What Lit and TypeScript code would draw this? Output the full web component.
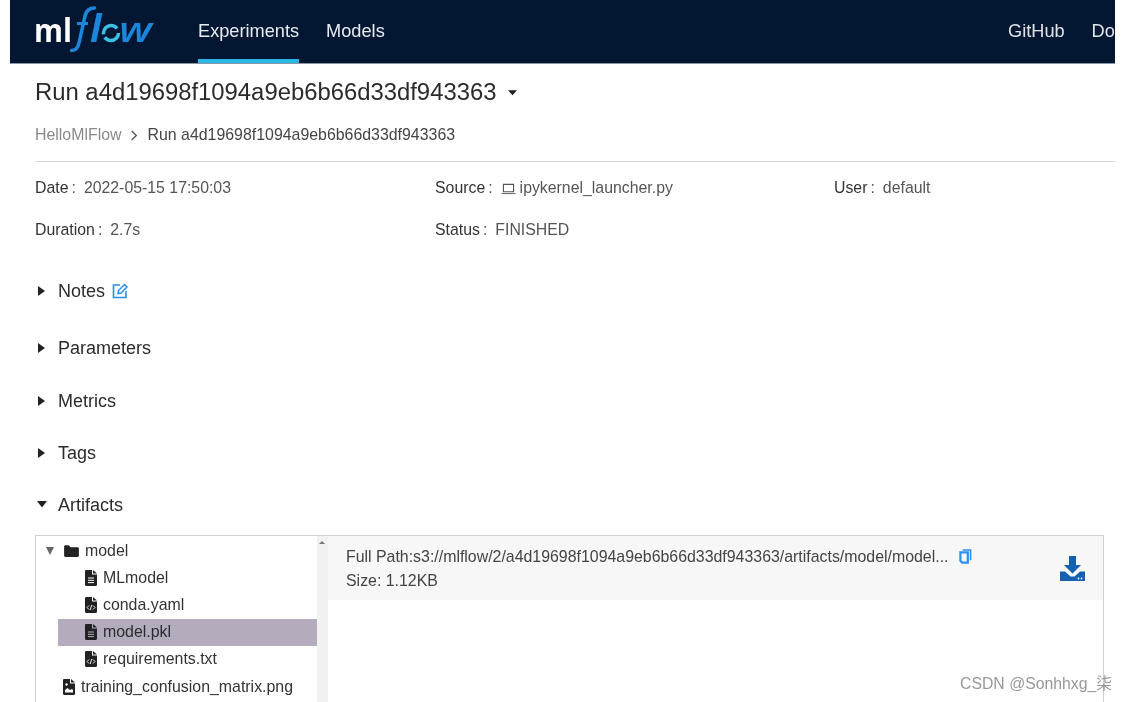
import { LitElement, html, css, svg } from "lit";
import { customElement } from "lit/decorators.js";

const docPath = svg`<path d="M0 1.200C0 .5.5 0 1.200 0H7v4.400h5v10.400c0 .7-.5 1.200-1.200 1.200H1.200C.5 16 0 15.500 0 14.800z" fill="#222"/><path d="M8 0l4 3.400H8z" fill="#222"/>`;
const fileIcon = (selected = false) => svg`<svg class="fi" viewBox="0 0 12 16" width="12" height="16">${docPath}<path d="M3 8h6M3 10.300h6M3 12.600h6" stroke="${selected ? "#b4abbd" : "#fff"}" stroke-width="1"/></svg>`;
const codeIcon = () => svg`<svg class="fi" viewBox="0 0 12 16" width="12" height="16">${docPath}<path d="M4 8.500L2 10.500l2 2M8 8.500l2 2-2 2M6.800 8l-1.600 5" fill="none" stroke="#fff" stroke-width=".9"/></svg>`;
const imgIcon = () => svg`<svg class="fi" viewBox="0 0 12 16" width="12" height="16">${docPath}<path d="M2 13.500V11l2.500-2 2.500 2 2-1 1 1v2.500z" fill="#fff"/><circle cx="3.500" cy="5.500" r="1.200" fill="#fff"/></svg>`;
const caretRight = svg`<svg viewBox="0 0 8 10" width="8" height="10"><path d="M0 0l7 5-7 5z" fill="#222"/></svg>`;
const caretDown = svg`<svg viewBox="0 0 10 8" width="10" height="8"><path d="M0 0h10L5 6.500z" fill="#222"/></svg>`;

@customElement("app-root")
export class AppRoot extends LitElement {
  static styles = css`
    :host { display: block; height: 702px; overflow: hidden; background: #fff;
      font-family: "Liberation Sans", Arial, sans-serif; color: #333; position: relative; filter: blur(.3px); }
    .frame { margin: 0 11px 0 10px; height: 702px; overflow: hidden; }
    header { height: 63px; background: #031732; border-bottom: 1px solid #8b94a3; display: flex; overflow: hidden; white-space: nowrap; }
    .logo { width: 163px; padding-left: 25px; box-sizing: content-box; display: block; height: 63px; flex: none; }
    .nav { display: flex; gap: 27px; flex: none; }
    .nav a { color: #e8ebef; font-size: 18.200px; height: 63px; box-sizing: border-box; line-height: 63px; display: block; }
    .nav a.on { border-bottom: 4px solid #2bb8e6; }
    .right { margin-left: auto; display: flex; gap: 27px; width: 107px; flex: none; }
    .right a { color: #dfe3e8; font-size: 18.200px; line-height: 63px; }
    main { padding-left: 25px; }
    h1 { margin: 0; font-weight: 400; font-size: 23.850px; line-height: 28px; padding-top: 14px; color: #2b2b2b; display: flex; align-items: center; }
    h1 svg { margin-left: 12px; margin-top: 1px; }
    .crumb { margin-top: 17px; height: 24px; font-size: 15.900px; line-height: 24px; display: flex; align-items: center; color: #444; }
    .crumb .p { color: #8a8a8a; }
    .crumb svg { margin: 0 10px 0 8px; }
    hr { border: 0; border-top: 1px solid #d6d6d6; margin: 14px 0 0; }
    .meta { display: grid; grid-template-columns: 400px 399px 1fr; row-gap: 20px; margin-top: 15px; font-size: 15.850px; line-height: 22px; }
    .meta .k { color: #333; }
    .meta .c { margin: 0 8px 0 3px; color: #555; }
    .meta .v { color: #555; }
    .meta svg { vertical-align: -2px; margin-right: 4px; }
    .sec { display: flex; align-items: center; font-size: 18px; line-height: 22px; color: #2b2b2b; }
    .sec .car { width: 23px; display: flex; padding-left: 3px; box-sizing: border-box; }
    .sec .car.d { padding-left: 2px; }
    .sec .edit { margin-left: 7px; }
    .s1 { margin-top: 39px; } .s2 { margin-top: 35px; } .s3 { margin-top: 30px; } .s3a { margin-top: 31px; }
    .box { margin: 19px 11px 0 0; border: 1px solid #cfcfcf; border-bottom: 0; height: 180px; display: flex; }
    .tree { width: 281px; flex: none; font-size: 15.900px; padding-top: 1px; box-sizing: border-box; color: #333; }
    .row { height: 27.200px; display: flex; align-items: center; white-space: nowrap; }
    .row .fi { margin-right: 6px; flex: none; }
    .l0 { padding-left: 27px; }
    .l1 { padding-left: 49px; }
    .row.sel { background: #b4abbd; color: #2b2b2b; margin-left: 22px; padding-left: 27px; }
    .l0c { padding-left: 10px; }
    .l0c .arrow { margin-right: 9px; display: flex; }
    .l0c .folder { margin-right: 5px; }
    .scroll { width: 11px; background: #f1f1f1; flex: none; position: relative; }
    .scroll i { position: absolute; left: 2px; top: 5px; border-left: 3px solid transparent; border-right: 3px solid transparent; border-bottom: 3px solid #777; }
    .panel { flex: 1; min-width: 0; }
    .info { height: 64px; background: #f7f7f7; padding: 9px 0 0 18px; box-sizing: border-box; font-size: 15.900px; line-height: 24px; position: relative; color: #444; white-space: nowrap; }
    .info .first { height: 24px; }
    .info .copy { margin-left: 10px; vertical-align: -2px; }
    .dl { position: absolute; right: 18px; top: 20px; }
    .wm { position: absolute; left: 960px; top: 674px; font-family: "Liberation Sans", "Noto Sans CJK SC", sans-serif; font-size: 15.800px; line-height: 20px; color: rgba(125,125,125,.8); white-space: nowrap; }
    .logotext { font-family: "Open Sans", sans-serif; }
  `;

  render() {
    const caret = svg`<svg viewBox="0 0 10 6" width="9" height="6"><path d="M0 0h10L5 5.500z" fill="#222"/></svg>`;
    return html`
      <div class="frame">
        <header>
          <svg class="logo" viewBox="0 0 163 63" aria-label="mlflow">
            <text x="-1" y="42" class="logotext" font-size="33" font-weight="700" fill="#fff" textLength="38" lengthAdjust="spacingAndGlyphs">ml</text>
            <path d="M36.500 50.500c4.500 0 6.500-2.500 7.500-7.500l6-27c1.200-5.500 4-8 9.500-8" fill="none" stroke="#1b86dc" stroke-width="3.500" stroke-linecap="round"/>
            <path d="M42 23.500h11" stroke="#1b86dc" stroke-width="3"/>
            <text x="55" y="42" class="logotext" font-size="38" font-style="italic" font-weight="700" fill="#1b86dc">l</text>
            <circle cx="76" cy="33" r="7.500" fill="none" stroke="#3cc0e5" stroke-width="3.500" stroke-dasharray="19 3 20 5"/>
            <text x="84" y="42" class="logotext" font-size="34" font-style="italic" font-weight="600" fill="#1b86dc" textLength="33" lengthAdjust="spacingAndGlyphs">w</text>
          </svg>
          <nav class="nav"><a class="on">Experiments</a><a>Models</a></nav>
          <div class="right"><a>GitHub</a><a>Docs</a></div>
        </header>
        <main>
          <h1>Run a4d19698f1094a9eb6b66d33df943363 ${caret}</h1>
          <div class="crumb"><span class="p">HelloMlFlow</span>
            <svg viewBox="0 0 8 12" width="8" height="11"><path d="M1.500 1l5 5-5 5" fill="none" stroke="#555" stroke-width="1.500"/></svg>
            <span>Run a4d19698f1094a9eb6b66d33df943363</span></div>
          <hr />
          <div class="meta">
            <div><span class="k">Date</span><span class="c">:</span><span class="v">2022-05-15 17:50:03</span></div>
            <div><span class="k">Source</span><span class="c">:</span><svg viewBox="0 0 16 13" width="15" height="12"><path d="M2.500 1.500h11v8h-11z" fill="none" stroke="#555" stroke-width="1.200"/><path d="M.5 11h15v1H.5z" fill="#555"/></svg><span class="v">ipykernel_launcher.py</span></div>
            <div><span class="k">User</span><span class="c">:</span><span class="v">default</span></div>
            <div><span class="k">Duration</span><span class="c">:</span><span class="v">2.7s</span></div>
            <div><span class="k">Status</span><span class="c">:</span><span class="v">FINISHED</span></div>
          </div>
          <div class="sec s1"><span class="car">${caretRight}</span>Notes
            <svg class="edit" viewBox="0 0 16 16" width="16" height="16"><path d="M8 2H1.500v12.500H14V8" fill="none" stroke="#2a90f0" stroke-width="1.600"/><path d="M6 10.500l.5-3L12.500 1.500l2.500 2.500-6 6z" fill="none" stroke="#2a90f0" stroke-width="1.500"/></svg></div>
          <div class="sec s2"><span class="car">${caretRight}</span>Parameters</div>
          <div class="sec s3a"><span class="car">${caretRight}</span>Metrics</div>
          <div class="sec s3"><span class="car">${caretRight}</span>Tags</div>
          <div class="sec s3"><span class="car d">${caretDown}</span>Artifacts</div>
          <div class="box">
            <div class="tree">
              <div class="row l0c"><span class="arrow"><svg viewBox="0 0 8 8" width="8" height="8"><path d="M0 0h8L4 8z" fill="#666"/></svg></span>
                <svg class="folder" viewBox="0 0 16 13" width="17" height="12"><path d="M0 2c0-1 .6-1.600 1.500-1.600h3.500L7 2.500h7.500c1 0 1.500.6 1.500 1.500v7.500c0 1-.6 1.500-1.500 1.500h-13C.6 13 0 12.400 0 11.500z" fill="#222"/></svg>model</div>
              <div class="row l1">${fileIcon()}MLmodel</div>
              <div class="row l1">${codeIcon()}conda.yaml</div>
              <div class="row sel">${fileIcon(true)}model.pkl</div>
              <div class="row l1">${codeIcon()}requirements.txt</div>
              <div class="row l0">${imgIcon()}training_confusion_matrix.png</div>
            </div>
            <div class="scroll"><i></i></div>
            <div class="panel">
              <div class="info">
                <div class="first">Full Path:s3://mlflow/2/a4d19698f1094a9eb6b66d33df943363/artifacts/model/model...<svg class="copy" viewBox="0 0 14 16" width="13" height="15"><path d="M4 1h8.500v11" fill="none" stroke="#2a90f0" stroke-width="1.700"/><path d="M1.500 3.500h8v11h-6l-2-2z" fill="none" stroke="#2a90f0" stroke-width="2.400"/></svg></div>
                <div>Size: 1.12KB</div>
                <svg class="dl" viewBox="0 0 25 25" width="25" height="25"><path d="M9 0h7v9h5l-8.500 8.500L4 9h5z" fill="#1361b0"/><path d="M0 15.500h5l5.500 5h4l5.500-5h5V25H0z" fill="#1361b0"/><circle cx="18.500" cy="22.500" r=".9" fill="#fff"/><circle cx="21.500" cy="22.500" r=".9" fill="#fff"/></svg>
              </div>
            </div>
          </div>
        </main>
      </div>
      <div class="wm">CSDN @Sonhhxg_柒</div>
    `;
  }
}
